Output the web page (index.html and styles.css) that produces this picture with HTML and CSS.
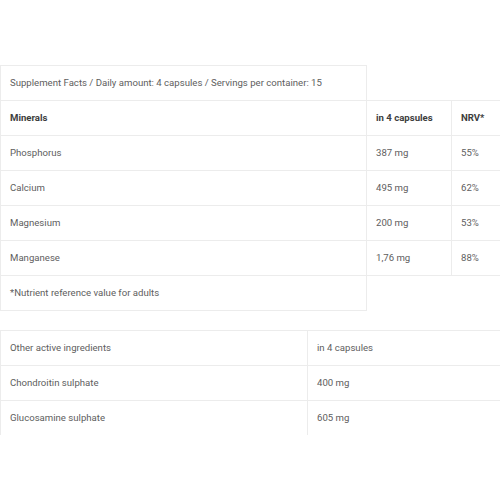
FILE: index.html
```html
<!DOCTYPE html>
<html>
<head>
<meta charset="utf-8">
<link rel="stylesheet" href="styles.css">
</head>
<body>
<div class="page">
  <table class="facts">
    <colgroup><col class="c1"><col class="c2"><col class="c3"></colgroup>
    <tr><td>Supplement Facts / Daily amount: 4 capsules / Servings per container: 15</td></tr>
    <tr class="head"><td>Minerals</td><td>in 4 capsules</td><td>NRV*</td></tr>
    <tr><td>Phosphorus</td><td>387 mg</td><td>55%</td></tr>
    <tr><td>Calcium</td><td>495 mg</td><td>62%</td></tr>
    <tr><td>Magnesium</td><td>200 mg</td><td>53%</td></tr>
    <tr><td>Manganese</td><td>1,76 mg</td><td>88%</td></tr>
    <tr><td>*Nutrient reference value for adults</td></tr>
  </table>
  <div class="clip">
    <table class="other">
      <colgroup><col class="o1"><col class="o2"></colgroup>
      <tr><td>Other active ingredients</td><td>in 4 capsules</td></tr>
      <tr><td>Chondroitin sulphate</td><td>400 mg</td></tr>
      <tr><td>Glucosamine sulphate</td><td>605 mg</td></tr>
    </table>
  </div>
</div>
</body>
</html>
```
FILE: styles.css
```css
html, body {
  margin: 0;
  padding: 0;
  background: #fff;
}
body {
  font-family: Roboto, "Liberation Sans", sans-serif;
  font-size: 9.6px;
  color: #5e5e5e;
}
.page {
  padding-top: 65px;
  width: 500px;
}
table {
  border-collapse: collapse;
  table-layout: fixed;
  width: 500px;
}
td {
  border: 1px solid #ececec;
  height: 34px;
  padding: 0 9px;
  line-height: 14px;
  vertical-align: middle;
  white-space: nowrap;
}
.c1 { width: 366px; }
.c2 { width: 85px; }
.c3 { width: 49px; }
.head td {
  font-weight: bold;
  color: #3d3d3d;
}
.clip {
  margin-top: 19px;
  height: 105px;
  overflow: hidden;
}
.o1 { width: 307px; }
.o2 { width: 193px; }
```
